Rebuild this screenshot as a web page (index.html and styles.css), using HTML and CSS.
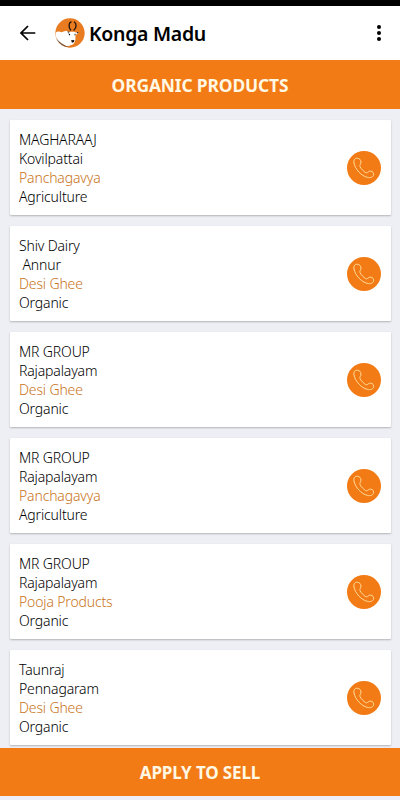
FILE: index.html
```html
<!DOCTYPE html>
<html lang="en">

<head>
    <meta charset="UTF-8">
    <meta name="viewport" content="width=device-width, initial-scale=1.0">
    <title>Konga Madu</title>
    <link rel="stylesheet" href="styles.css">
</head>

<body>
    <!-- Shared icons -->
    <svg class="sprite">
        <symbol id="icon-phone" viewBox="0 0 102 102">
            <path d="M32 22C25 20 19 26 21 36C24 54 43 75 61 79C70 82 80 78 80 70C80 62 72 59 67 61C62 63 61 67 56 65C50 61 42 53 39 47C37 42 42 39 42 33C41 26 37 22 32 22Z"/>
        </symbol>
    </svg>

    <div class="app">
        <div class="status-bar"></div>

        <header class="header">
            <button class="icon-btn back" aria-label="Back">
                <svg width="16" height="16" viewBox="0 0 16 16">
                    <path d="M15.3 8H1.2M8 1L1 8L8 15"/>
                </svg>
            </button>
            <svg class="logo" width="30" height="30" viewBox="0 0 90 90">
                <circle cx="45" cy="45" r="44" fill="#e97b20"/>
                <path d="M2 44C10 38 15 42 20 43C27 39 35 37 42 41L58 41C62 45 67 42 71 43C70 48 65 50 61 50C62 58 62 67 58 74C54 82 48 80 43 83C34 88 23 83 15 76C6 68 1 56 2 44Z" fill="#fff"/>
                <path d="M4 61C11 79 27 88 46 88C37 86 19 80 4 61Z" fill="#765135"/>
                <g fill="none" stroke="#20140c" stroke-width="4" stroke-linecap="round">
                    <path d="M47 36C40 28 41 14 48 12"/>
                    <path d="M57 36C65 30 65 16 58 12"/>
                </g>
                <path d="M36 41L44 40L42 45ZM65 42L72 42L67 47Z" fill="#49301c"/>
                <path d="M40 46L46 49L43 53ZM58 48L62 47L60 53ZM48 67L58 66L57 72L51 74Z" fill="#111"/>
            </svg>
            <h1 class="title">Konga Madu</h1>
            <button class="icon-btn menu" aria-label="Menu">
                <svg width="4" height="16" viewBox="0 0 4 16">
                    <circle cx="2" cy="2" r="2"/>
                    <circle cx="2" cy="8" r="2"/>
                    <circle cx="2" cy="14" r="2"/>
                </svg>
            </button>
        </header>

        <h2 class="banner">ORGANIC PRODUCTS</h2>

        <!-- Product list -->
        <main class="list">
            <div class="card">
                <div class="info">
                    <p>MAGHARAAJ</p>
                    <p>Kovilpattai</p>
                    <p class="product">Panchagavya</p>
                    <p>Agriculture</p>
                </div>
                <button class="call" aria-label="Call"><svg><use href="#icon-phone"/></svg></button>
            </div>
            <div class="card">
                <div class="info">
                    <p>Shiv Dairy</p>
                    <p> Annur</p>
                    <p class="product">Desi Ghee</p>
                    <p>Organic</p>
                </div>
                <button class="call" aria-label="Call"><svg><use href="#icon-phone"/></svg></button>
            </div>
            <div class="card">
                <div class="info">
                    <p>MR GROUP</p>
                    <p>Rajapalayam</p>
                    <p class="product">Desi Ghee</p>
                    <p>Organic</p>
                </div>
                <button class="call" aria-label="Call"><svg><use href="#icon-phone"/></svg></button>
            </div>
            <div class="card">
                <div class="info">
                    <p>MR GROUP</p>
                    <p>Rajapalayam</p>
                    <p class="product">Panchagavya</p>
                    <p>Agriculture</p>
                </div>
                <button class="call" aria-label="Call"><svg><use href="#icon-phone"/></svg></button>
            </div>
            <div class="card">
                <div class="info">
                    <p>MR GROUP</p>
                    <p>Rajapalayam</p>
                    <p class="product">Pooja Products</p>
                    <p>Organic</p>
                </div>
                <button class="call" aria-label="Call"><svg><use href="#icon-phone"/></svg></button>
            </div>
            <div class="card">
                <div class="info">
                    <p>Taunraj</p>
                    <p>Pennagaram</p>
                    <p class="product">Desi Ghee</p>
                    <p>Organic</p>
                </div>
                <button class="call" aria-label="Call"><svg><use href="#icon-phone"/></svg></button>
            </div>
        </main>

        <button class="apply">APPLY TO SELL</button>
    </div>
</body>

</html>
```

FILE: styles.css
```css
* {
    box-sizing: border-box;
    margin: 0;
    padding: 0;
}

body {
    font-family: "Noto Sans", "Open Sans", sans-serif;
    background: #eeeff4;
    color: #000;
    overflow: hidden;
}

button {
    border: none;
    background: none;
    font-family: inherit;
}

.sprite {
    display: none;
}

.app {
    height: 800px;
    display: flex;
    flex-direction: column;
    padding-bottom: 4px;
}

.status-bar {
    height: 6px;
    background: #000;
}

/* Header */
.header {
    height: 54px;
    display: flex;
    align-items: center;
    padding: 0 19px 0 20px;
    background: #fff;
}

.icon-btn {
    display: flex;
}

.back svg {
    fill: none;
    stroke: #000;
    stroke-width: 1.7;
}

.logo {
    margin-left: 19px;
}

.title {
    margin-left: 4px;
    font-size: 19.5px;
    font-weight: 600;
    letter-spacing: -0.3px;
}

.menu {
    margin-left: auto;
}

.banner,
.apply {
    flex: none;
    display: flex;
    align-items: center;
    justify-content: center;
    background: #f27b15;
    color: #fff8e4;
    font-size: 17.4px;
    font-weight: 700;
    letter-spacing: -0.13px;
}

.banner {
    height: 49px;
}

.apply {
    height: 48px;
    padding-top: 1px;
    font-size: 17px;
}

/* Product list */
.list {
    flex: 1;
    min-height: 0;
    display: flex;
    flex-direction: column;
    gap: 11px;
    padding: 11px 9px 0 10px;
    overflow: hidden;
}

.card {
    flex: none;
    height: 95px;
    display: flex;
    align-items: center;
    justify-content: space-between;
    padding: 0 10px 0 9px;
    background: #fff;
    border-radius: 1px;
    box-shadow: 0 1px 2px rgba(0, 0, 0, 0.25);
}

.info {
    padding-top: 1px;
    font-size: 14px;
    font-weight: 350;
    line-height: 19px;
    letter-spacing: -0.15px;
}

.info p {
    white-space: pre;
}

.product {
    color: #c9741a;
}

.call {
    width: 34px;
    height: 34px;
    border-radius: 50%;
    background: #f27b15;
}

.call svg {
    display: block;
    width: 34px;
    height: 34px;
    fill: none;
    stroke: #ffdd9b;
    stroke-width: 3;
}
```
